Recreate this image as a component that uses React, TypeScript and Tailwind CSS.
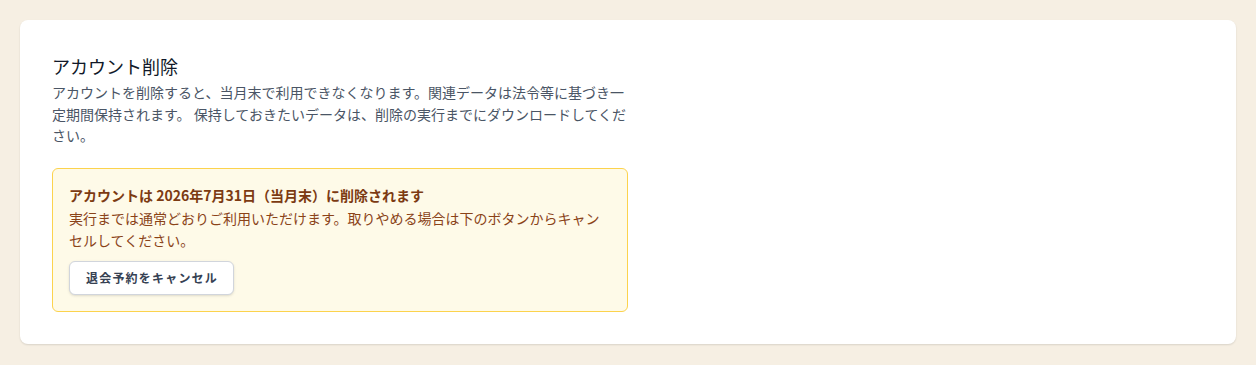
export default function App() {
  return (
    <div
      className="min-h-[365px] bg-[#f6efe3] p-5"
      style={{ fontFamily: '"Noto Sans CJK JP", "Noto Sans", sans-serif' }}
    >
      <div className="rounded-lg bg-white p-8 shadow-[0_1px_2px_rgba(0,0,0,0.12)]">
        <h2 className="text-lg leading-7 text-gray-900">アカウント削除</h2>
        <p className="mt-0.5 max-w-xl text-sm leading-[21.5px] text-gray-600">
          アカウントを削除すると、当月末で利用できなくなります。関連データは法令等に基づき一定期間保持されます。 保持しておきたいデータは、削除の実行までにダウンロードしてください。
        </p>
        <div className="mt-[21px] max-w-xl rounded-md border border-[#fcd34d] bg-[#fefae8] p-4">
          <p className="text-sm font-bold leading-5 text-[#7c3a12]">
            アカウントは 2026年7月31日（当月末）に削除されます
          </p>
          <p className="mt-0.5 text-sm leading-[22px] text-[#8a4318]">
            実行までは通常どおりご利用いただけます。取りやめる場合は下のボタンからキャンセルしてください。
          </p>
          <button className="mt-2.5 h-[34px] rounded-md border border-gray-300 bg-white pl-4 pr-[15px] text-xs font-semibold tracking-[0.1em] text-gray-700 shadow-sm">
            退会予約をキャンセル
          </button>
        </div>
      </div>
    </div>
  );
}
